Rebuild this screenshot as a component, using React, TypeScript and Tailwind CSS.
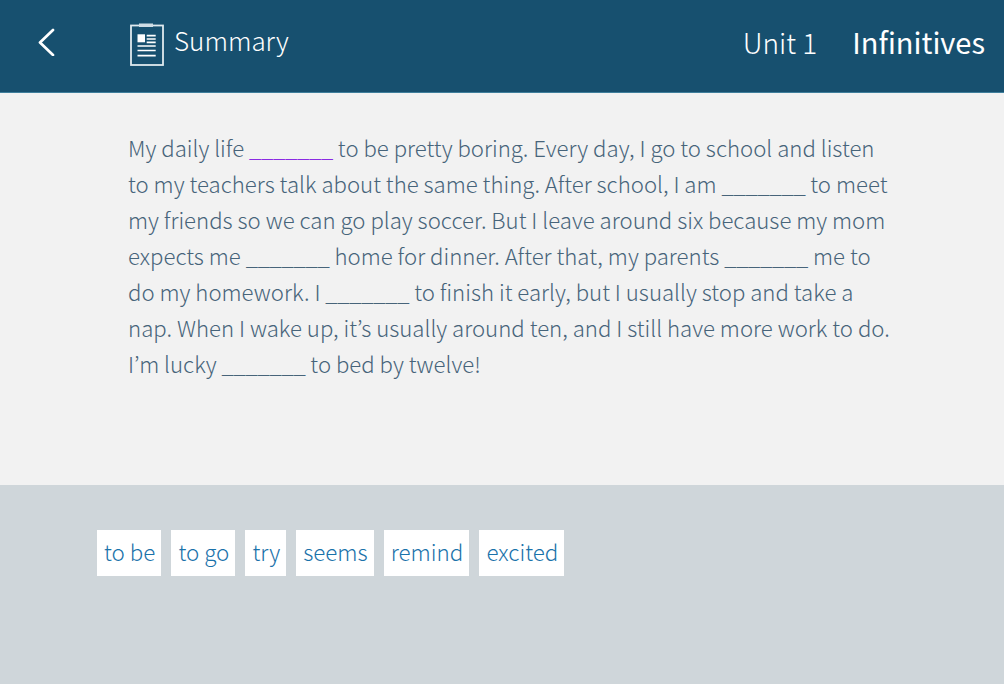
const font = "font-['Noto_Sans_CJK_JP','Noto_Sans',sans-serif]";

function Blank({ first }: { first?: boolean }) {
  return (
    <span className={`tracking-[-0.3px] ${first ? "text-[#8a2be2]" : ""}`}>_______</span>
  );
}

const words = ["to be", "to go", "try", "seems", "remind", "excited"];

export default function App() {
  return (
    <div className={`${font} w-[1004px] h-[684px] flex flex-col overflow-hidden font-light`}>
      {/* header */}
      <header className="h-[93px] shrink-0 bg-[#17506f] border-b border-[#3f7f9c] flex items-start text-white">
        <svg className="ml-[37px] mt-[28px]" width="18" height="28" viewBox="0 0 18 28" fill="none">
          <path d="M16 2 L3 14.5 L16 27" stroke="#fff" strokeWidth="2.7" strokeLinecap="round" strokeLinejoin="round" />
        </svg>
        <svg className="ml-[74px] mt-[22px]" width="36" height="46" viewBox="0 0 36 46" fill="none">
          <rect x="2" y="3.5" width="32" height="39.5" stroke="#dfe9ee" strokeWidth="1.8" />
          <rect x="10" y="1.5" width="14" height="3.5" fill="#cfdde5" />
          <rect x="8.5" y="12.3" width="7.5" height="8" fill="#fff" />
          <path d="M17.7 13.7h9M17.7 17h9M17.7 20.3h9M8.5 24h18.2M8.5 28.5h18.2M8.5 33.7h18.2" stroke="#fff" strokeWidth="1.7" />
        </svg>
        <span className="ml-[9px] mt-[21px] text-[26px] leading-[38px]">Summary</span>
        <div className="ml-auto mr-[19px] mt-[22px] flex items-baseline gap-[35px] leading-[38px]">
          <span className="text-[28px]">Unit 1</span>
          <span className="text-[29px] font-normal">Infinitives</span>
        </div>
      </header>

      {/* passage */}
      <main className="h-[392px] shrink-0 bg-[#f2f2f2] pt-[36px] pl-[128px] pr-[100px]">
        <p className="text-[22.2px] leading-[36px] text-[#47647a]">
          My daily life <Blank first /> to be pretty boring. Every day, I go to school and listen
          <br />
          to my teachers talk about the same thing. After school, I am <Blank /> to meet
          <br />
          my friends so we can go play soccer. But I leave around six because my mom
          <br />
          expects me <Blank /> home for dinner. After that, my parents <Blank /> me to
          <br />
          do my homework. I <Blank /> to finish it early, but I usually stop and take a
          <br />
          nap. When I wake up, it’s usually around ten, and I still have more work to do.
          <br />
          I’m lucky <Blank /> to bed by twelve!
        </p>
      </main>

      {/* word bank */}
      <section className="flex-1 bg-[#cfd6da] pt-[45px] pl-[97px]">
        <div className="flex gap-[10px]">
          {words.map((w) => (
            <span key={w} className="h-[46px] pl-[7px] pr-[6px] bg-white text-[#1a72aa] text-[22.4px] leading-[42px]">
              {w}
            </span>
          ))}
        </div>
      </section>
    </div>
  );
}
